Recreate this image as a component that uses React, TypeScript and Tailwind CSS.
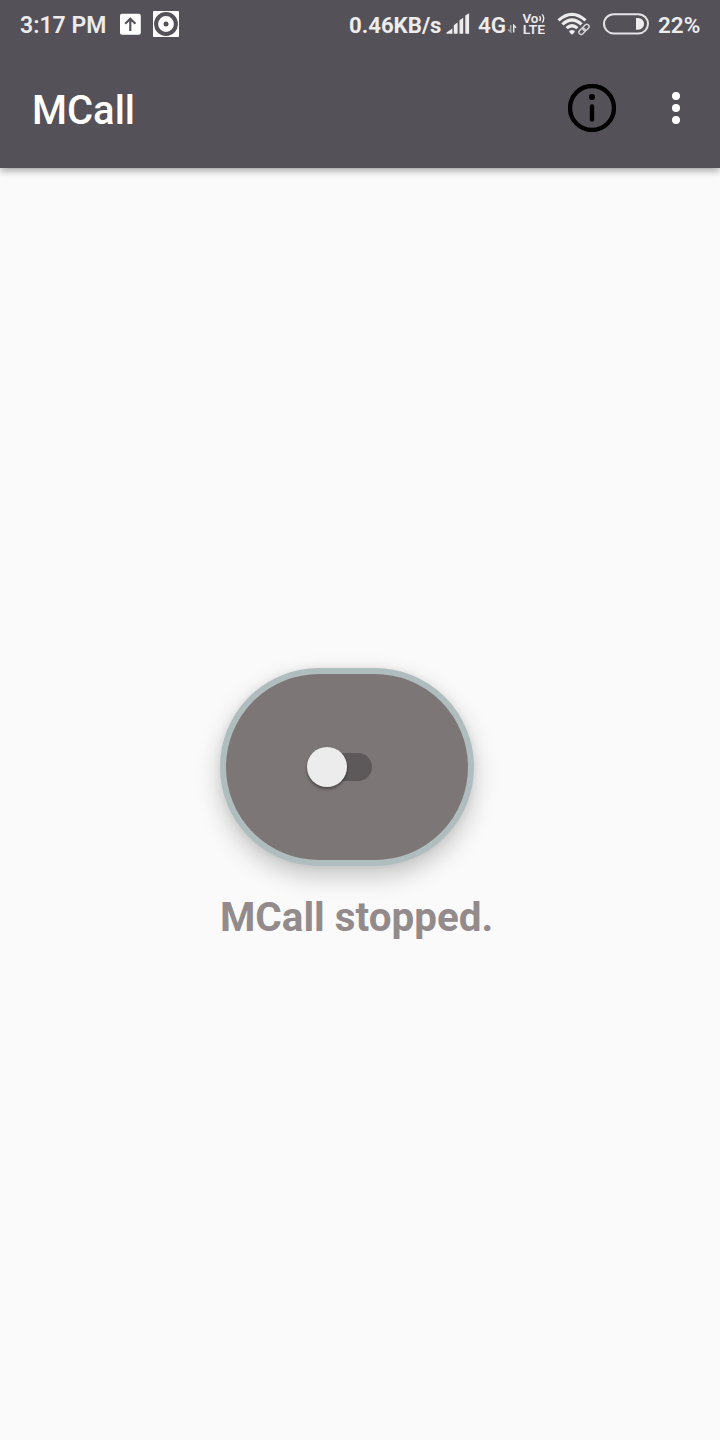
function UploadIcon() {
  return (
    <svg width="22" height="22" viewBox="0 0 22 22">
      <rect x="0" y="0.7" width="20.8" height="21" rx="2" fill="#fff" />
      <path d="M10.3 18V6M5.2 10.8l5.1-5.1 5.1 5.1" fill="none" stroke="#545158" strokeWidth="2.2" />
    </svg>
  );
}

function DiscIcon() {
  return (
    <svg width="26" height="26" viewBox="0 0 26 26">
      <rect width="26" height="26" rx="0.8" fill="#fff" />
      <circle cx="13" cy="13" r="9.9" fill="none" stroke="#545158" strokeWidth="4" />
      <circle cx="13" cy="13" r="2.5" fill="#545158" />
    </svg>
  );
}

function SignalIcon() {
  return (
    <svg width="24" height="22" viewBox="0 0 24 22" fill="#ececed">
      <path d="M0.5 20.7V19.5L6.4 15.4V20.7Z" />
      <path d="M7.8 20.7V12.2L11.6 9.6V20.7Z" />
      <path d="M13.5 20.7V7.3L17.2 4.8V20.7Z" />
      <path d="M19.3 20.7V2.4L23.1 0.3V20.7Z" />
    </svg>
  );
}

function DataArrows() {
  return (
    <svg width="10" height="10" viewBox="0 0 10 10">
      <path d="M3.7 1V8L1.3 5.6" fill="none" stroke="#a5a3a8" strokeWidth="1.5" />
      <path d="M6.7 8.5V1.3L9 3.8" fill="none" stroke="#e4e4e5" strokeWidth="1.5" />
    </svg>
  );
}

function VoLteIcon() {
  return (
    <svg width="26" height="24" viewBox="0 0 26 24" fill="#ececed" fontFamily="Roboto, sans-serif" fontWeight="600">
      <text x="0.4" y="10.8" fontSize="12.8" textLength="16" lengthAdjust="spacingAndGlyphs">Vo</text>
      <path d="M17.6 4.2q1.8 2.4 0 4.8M20.2 2.4q3.2 4 0 8.2" fill="none" stroke="#ececed" strokeWidth="1.4" />
      <text x="0.8" y="22" fontSize="12.4" textLength="22.2" lengthAdjust="spacingAndGlyphs">LTE</text>
    </svg>
  );
}

function WifiIcon() {
  return (
    <svg width="34" height="24" viewBox="0 0 34 24" fill="none" stroke="#ececed">
      <path d="M1.5 8.4Q15 -3.6 28.5 8.4" strokeWidth="3.2" />
      <path d="M5.4 12.4Q15 3.6 24.6 12.4" strokeWidth="3.2" />
      <path d="M9.6 16.2Q15 11.2 20.4 16.2" strokeWidth="3.2" />
      <path d="M12.1 19Q15 16.8 17.9 19Q18 20.4 15 22.8Q12 20.4 12.1 19Z" fill="#ececed" stroke="none" />
      <g transform="rotate(-45 27 17.4)" strokeWidth="1.5" stroke="#d4d4d6">
        <rect x="20.8" y="15.1" width="7" height="4.6" rx="2.3" />
        <rect x="26.2" y="15.1" width="7" height="4.6" rx="2.3" />
      </g>
    </svg>
  );
}

function BatteryIcon() {
  return (
    <svg width="46" height="22" viewBox="0 0 46 22">
      <rect x="1" y="1.2" width="44" height="19.2" rx="9.6" fill="none" stroke="#e4e4e5" strokeWidth="2" />
      <path d="M33 4.9h2.2a5.9 5.9 0 0 1 0 11.8H33Z" fill="#ececed" />
    </svg>
  );
}

function StatusBar() {
  return (
    <div className="flex h-12 items-center text-[23px] font-semibold leading-none whitespace-nowrap text-[#ececed]">
      <span className="ml-5 w-[100px] pt-[2px]">3:17 PM</span>
      <UploadIcon />
      <span className="ml-[11px]"><DiscIcon /></span>
      <span className="ml-[170px] w-[97px] pt-[2px] text-[22.2px] font-bold">0.46KB/s</span>
      <SignalIcon />
      <span className="ml-2 w-[29px] pt-[2px] text-[22.5px]">4G</span>
      <span className="mt-[9px]"><DataArrows /></span>
      <span className="ml-[5px]"><VoLteIcon /></span>
      <span className="ml-[9px]"><WifiIcon /></span>
      <span className="ml-[12px]"><BatteryIcon /></span>
      <span className="ml-[9px] pt-[2px] text-[22.5px]">22%</span>
    </div>
  );
}

function Toolbar() {
  return (
    <div className="flex h-[120px] items-center">
      <h1 className="ml-8 flex-1 pt-[6px] text-[40px] leading-none font-medium text-white">MCall</h1>
      <button aria-label="Information">
        <svg width="48" height="48" viewBox="0 0 48 48">
          <g className="blur-[0.6px]">
            <circle cx="24" cy="24" r="22" fill="none" stroke="#000" strokeWidth="4.4" />
            <circle cx="24" cy="13" r="3.1" fill="#000" />
            <path d="M24 22.5V35.5" stroke="#000" strokeWidth="4.4" strokeLinecap="round" />
          </g>
        </svg>
      </button>
      <button aria-label="More options" className="mr-10 ml-14 flex flex-col gap-1">
        <span className="size-2 rounded-full bg-white" />
        <span className="size-2 rounded-full bg-white" />
        <span className="size-2 rounded-full bg-white" />
      </button>
    </div>
  );
}

export default function App() {
  return (
    <div className="flex h-[1440px] w-[720px] flex-col overflow-hidden bg-[#fafafa] font-['Roboto',sans-serif]">
      <header className="h-[168px] shrink-0 bg-[#545158] shadow-[0_2px_8px_rgba(0,0,0,0.4)]">
        <StatusBar />
        <Toolbar />
      </header>
      <main className="mt-[500px] ml-[220px]">
        <div className="flex h-[198px] w-[254px] items-center rounded-[99px] border-[6px] border-[#b0bdbf] bg-[#7d7677] pl-[81px] shadow-[0_10px_24px_rgba(0,0,0,0.22),0_0_8px_rgba(0,0,0,0.06)]">
          <button role="switch" aria-checked="false" aria-label="MCall" className="flex h-7 w-[65px] items-center rounded-full bg-linear-to-r from-transparent from-30% to-[#5d5859] to-30%">
            <span className="size-10 rounded-full bg-[#ececec] shadow-[0_2px_3px_rgba(0,0,0,0.4)]" />
          </button>
        </div>
        <p className="mt-[31px] text-[40.4px] leading-[42px] font-bold whitespace-nowrap text-[#938b8b]">MCall stopped.</p>
      </main>
    </div>
  );
}
